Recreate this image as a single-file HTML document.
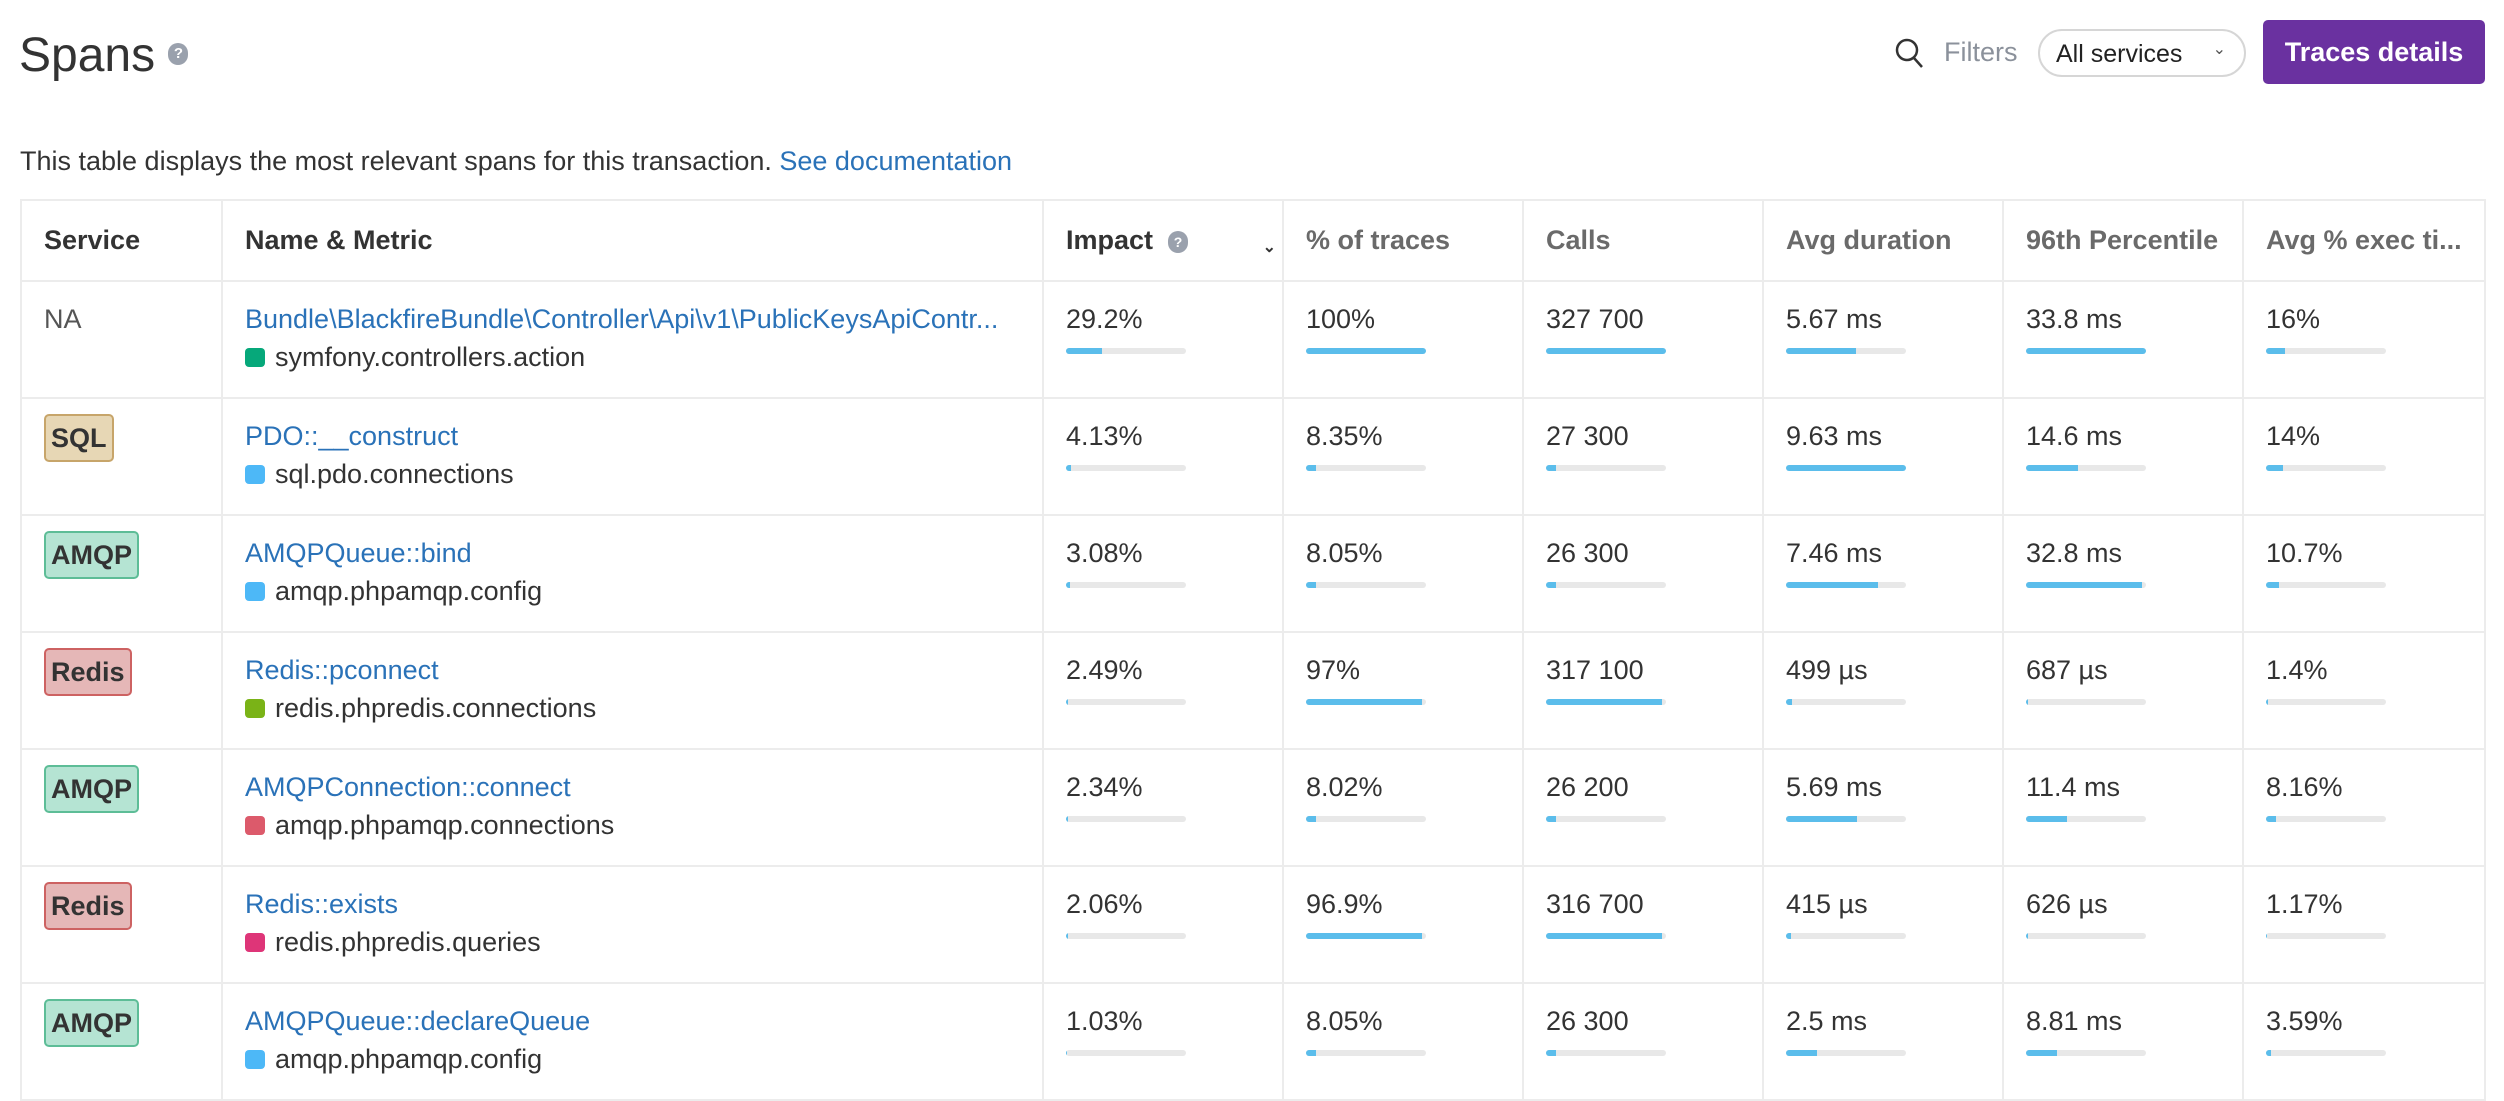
<!DOCTYPE html>
<html><head><meta charset="utf-8"><style>
*{box-sizing:border-box;margin:0;padding:0}
body{width:2504px;height:1090px;overflow:hidden;background:#fff;font-family:"Liberation Sans",sans-serif;color:#333;position:relative}
.title{position:absolute;left:19px;top:28px;font-size:48px;color:#333}
.help{display:inline-block;width:20px;height:22px;border-radius:10px;background:#9aa1ad;color:#fff;font-size:15px;text-align:center;line-height:22px;font-weight:bold;vertical-align:middle}
.desc{position:absolute;left:20px;top:146px;font-size:27px;color:#333}
a{color:#2a72b8;text-decoration:none}
.search{position:absolute;left:1894px;top:37px}
.filters{position:absolute;left:1944px;top:37px;font-size:27px;color:#8b919b}
.sel{position:absolute;left:2038px;top:29px;width:208px;height:48px;border:2px solid #d6d6d6;border-radius:24px;font-size:25px;color:#222;padding:9px 0 0 16px}
.sel span{position:absolute;right:18px;top:8px;font-size:16px;color:#555}
.btn{position:absolute;left:2263px;top:20px;width:222px;height:64px;background:#6a31a0;border-radius:5px;color:#fff;font-size:27px;font-weight:bold;text-align:center;line-height:64px}
table{position:absolute;left:20px;top:199px;border-collapse:collapse;table-layout:fixed;width:2464px;border:2px solid #e6e6e6}
td,th{border:2px solid #ececec;vertical-align:top;padding:0 0 0 22px;text-align:left;font-size:27px;position:relative;white-space:nowrap;overflow:hidden}
th{height:81px;font-weight:bold;padding-top:24px;color:#6a6a6a}
th.d{color:#333}
td{height:117px;padding-top:22px}
.m{margin-top:7px;display:flex;align-items:center}
.sq{width:20px;height:19px;border-radius:4px;margin-right:10px}
.bar{width:120px;height:6px;background:#e8e8e8;border-radius:3px;margin-top:13px;overflow:hidden}
.bar i{display:block;height:6px;background:#5bbdeb}
.b{display:inline-block;height:48px;line-height:44px;padding:0 5px;border:2px solid;border-radius:5px;font-weight:bold;color:#333;margin-top:-7px}
.sql{background:#e7d7b5;border-color:#c7a56a}
.amqp{background:#b5e4d3;border-color:#5dbd97}
.redis{background:#e5b7b7;border-color:#cd6262}
</style></head><body>
<div class="title">Spans <span class="help" style="position:relative;top:-4px">?</span></div>
<div class="desc">This table displays the most relevant spans for this transaction. <a>See documentation</a></div>
<svg class="search" width="32" height="32" viewBox="0 0 32 32"><circle cx="13" cy="13" r="10" fill="none" stroke="#333" stroke-width="2.5"/><line x1="20" y1="21" x2="28" y2="30" stroke="#333" stroke-width="2.5"/></svg>
<div class="filters">Filters</div>
<div class="sel">All services<span>&#8964;</span></div>
<div class="btn">Traces details</div>
<table>
<colgroup><col style="width:201px"><col style="width:821px"><col style="width:240px"><col style="width:240px"><col style="width:240px"><col style="width:240px"><col style="width:240px"><col style="width:242px"></colgroup>
<tr><th class="d">Service</th><th class="d">Name &amp; Metric</th><th class="d">Impact &nbsp;<span class="help" style="font-size:14px">?</span><span style="position:absolute;right:6px;top:36px;font-size:16px">&#8964;</span></th><th>% of traces</th><th>Calls</th><th>Avg duration</th><th>96th Percentile</th><th>Avg % exec ti...</th></tr>
<tr><td style="color:#555">NA</td><td><a>Bundle\BlackfireBundle\Controller\Api\v1\PublicKeysApiContr...</a><div class="m"><span class="sq" style="background:#06a87a"></span>symfony.controllers.action</div></td>
<td>29.2%<div class="bar"><i style="width:30%"></i></div></td><td>100%<div class="bar"><i style="width:100%"></i></div></td><td>327 700<div class="bar"><i style="width:100%"></i></div></td><td>5.67 ms<div class="bar"><i style="width:58%"></i></div></td><td>33.8 ms<div class="bar"><i style="width:100%"></i></div></td><td>16%<div class="bar"><i style="width:16%"></i></div></td></tr>
<tr><td><span class="b sql">SQL</span></td><td><a>PDO::__construct</a><div class="m"><span class="sq" style="background:#4db8f7"></span>sql.pdo.connections</div></td>
<td>4.13%<div class="bar"><i style="width:4%"></i></div></td><td>8.35%<div class="bar"><i style="width:8%"></i></div></td><td>27 300<div class="bar"><i style="width:8%"></i></div></td><td>9.63 ms<div class="bar"><i style="width:100%"></i></div></td><td>14.6 ms<div class="bar"><i style="width:43%"></i></div></td><td>14%<div class="bar"><i style="width:14%"></i></div></td></tr>
<tr><td><span class="b amqp">AMQP</span></td><td><a>AMQPQueue::bind</a><div class="m"><span class="sq" style="background:#4db8f7"></span>amqp.phpamqp.config</div></td>
<td>3.08%<div class="bar"><i style="width:3%"></i></div></td><td>8.05%<div class="bar"><i style="width:8%"></i></div></td><td>26 300<div class="bar"><i style="width:8%"></i></div></td><td>7.46 ms<div class="bar"><i style="width:77%"></i></div></td><td>32.8 ms<div class="bar"><i style="width:97%"></i></div></td><td>10.7%<div class="bar"><i style="width:11%"></i></div></td></tr>
<tr><td><span class="b redis">Redis</span></td><td><a>Redis::pconnect</a><div class="m"><span class="sq" style="background:#7ab317"></span>redis.phpredis.connections</div></td>
<td>2.49%<div class="bar"><i style="width:2%"></i></div></td><td>97%<div class="bar"><i style="width:97%"></i></div></td><td>317 100<div class="bar"><i style="width:97%"></i></div></td><td>499 µs<div class="bar"><i style="width:5%"></i></div></td><td>687 µs<div class="bar"><i style="width:2%"></i></div></td><td>1.4%<div class="bar"><i style="width:1.5%"></i></div></td></tr>
<tr><td><span class="b amqp">AMQP</span></td><td><a>AMQPConnection::connect</a><div class="m"><span class="sq" style="background:#dc5a6b"></span>amqp.phpamqp.connections</div></td>
<td>2.34%<div class="bar"><i style="width:2%"></i></div></td><td>8.02%<div class="bar"><i style="width:8%"></i></div></td><td>26 200<div class="bar"><i style="width:8%"></i></div></td><td>5.69 ms<div class="bar"><i style="width:59%"></i></div></td><td>11.4 ms<div class="bar"><i style="width:34%"></i></div></td><td>8.16%<div class="bar"><i style="width:8%"></i></div></td></tr>
<tr><td><span class="b redis">Redis</span></td><td><a>Redis::exists</a><div class="m"><span class="sq" style="background:#de3578"></span>redis.phpredis.queries</div></td>
<td>2.06%<div class="bar"><i style="width:2%"></i></div></td><td>96.9%<div class="bar"><i style="width:97%"></i></div></td><td>316 700<div class="bar"><i style="width:97%"></i></div></td><td>415 µs<div class="bar"><i style="width:4%"></i></div></td><td>626 µs<div class="bar"><i style="width:2%"></i></div></td><td>1.17%<div class="bar"><i style="width:1.2%"></i></div></td></tr>
<tr><td><span class="b amqp">AMQP</span></td><td><a>AMQPQueue::declareQueue</a><div class="m"><span class="sq" style="background:#4db8f7"></span>amqp.phpamqp.config</div></td>
<td>1.03%<div class="bar"><i style="width:1%"></i></div></td><td>8.05%<div class="bar"><i style="width:8%"></i></div></td><td>26 300<div class="bar"><i style="width:8%"></i></div></td><td>2.5 ms<div class="bar"><i style="width:26%"></i></div></td><td>8.81 ms<div class="bar"><i style="width:26%"></i></div></td><td>3.59%<div class="bar"><i style="width:4%"></i></div></td></tr>
</table>
</body></html>
